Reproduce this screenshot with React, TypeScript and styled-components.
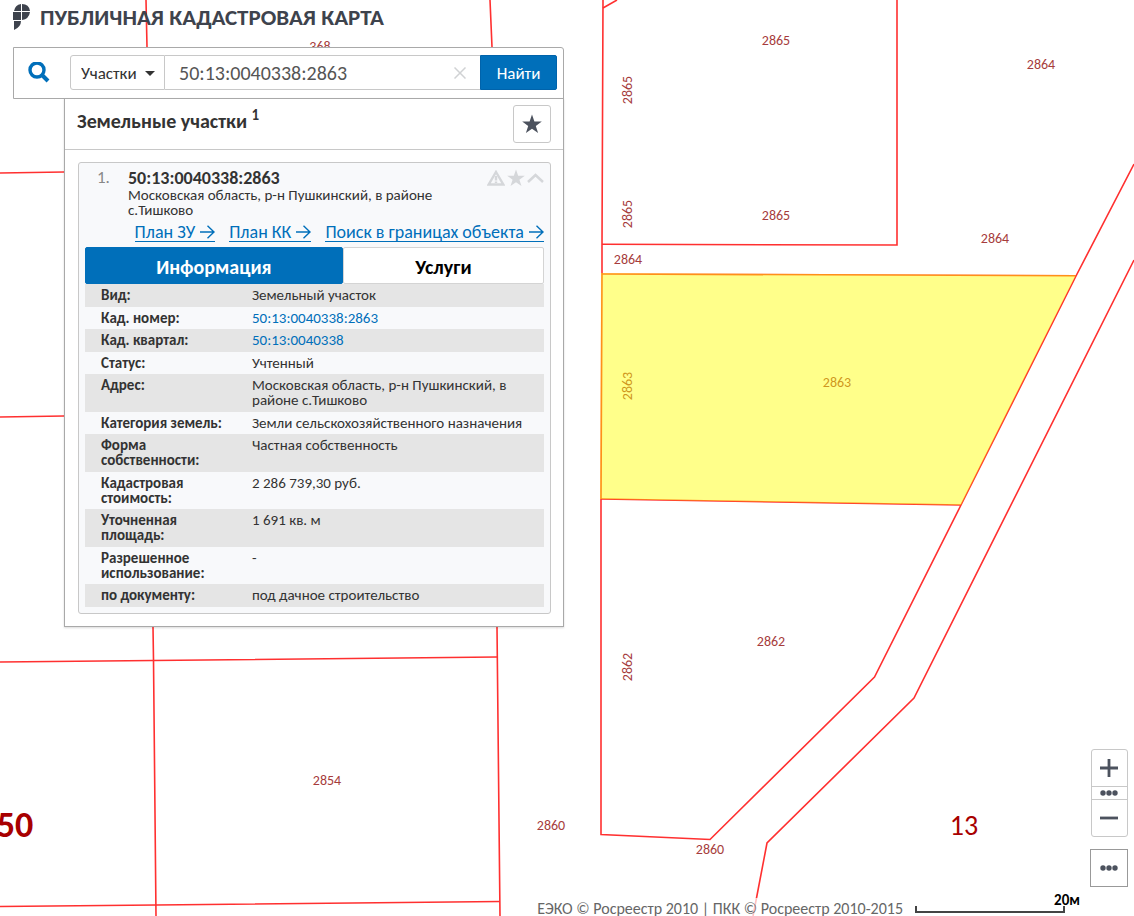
import React, { useState } from "react";
import styled, { createGlobalStyle } from "styled-components";

const GlobalStyle = createGlobalStyle`
  *, *::before, *::after { box-sizing: border-box; }
  body {
    margin: 0;
    background: #fff;
    color: #333;
    font-family: Carlito, Calibri, "Open Sans", "Noto Sans", sans-serif;
    font-size: 15px;
    line-height: 15px;
  }
  button, input, select { font: inherit; color: inherit; }
`;

const Page = styled.div`
  position: relative;
  display: flex;
  flex-direction: column;
  min-height: 100vh;
  overflow: hidden;
`;

const MapCanvas = styled.svg`
  position: absolute;
  inset: 0;
  width: 100%;
  height: 100%;
`;

const Boundary = styled.path`
  fill: none;
  stroke: #ff3030;
  stroke-width: 1.6;
`;

const Highlight = styled.path`
  fill: rgba(255, 255, 0, 0.46);
`;

const MapLabel = styled.text<{ $size?: number; $strong?: boolean }>`
  fill: ${(p) => (p.$size ? "#a80000" : "#a63c3c")};
  font-size: ${(p) => p.$size ?? 14}px;
  font-weight: ${(p) => (p.$strong ? 700 : 400)};
  text-anchor: middle;
  dominant-baseline: central;
`;

const Header = styled.header`
  position: relative;
  display: flex;
  align-items: center;
  gap: 9px;
  height: 47px;
  padding: 0 13px 14px;
`;

const Title = styled.h1`
  margin: 0;
  color: #3e434d;
  font-size: 23px;
  line-height: 26px;
`;

const Body = styled.main`
  position: relative;
  flex: 1;
  display: flex;
  justify-content: space-between;
  gap: 16px;
  padding: 0 6px 0 13px;
`;

const SearchPanel = styled.div`
  display: flex;
  flex-direction: column;
  width: 551px;
  min-width: 0;
`;

const SearchBar = styled.form`
  display: flex;
  align-items: center;
  height: 52px;
  padding: 0 6px 1px 14px;
  border: 1px solid #a9a9a9;
  border-radius: 0 3px 0 0;
  background: #fff;
`;

const SearchIcon = styled.svg`
  flex: none;
  width: 22px;
  height: 22px;
  margin-right: 20px;
`;

const KindField = styled.div`
  position: relative;
  flex: none;
  width: 95px;
  height: 35px;
`;

const KindSelect = styled.select`
  appearance: none;
  width: 100%;
  height: 100%;
  padding: 2px 20px 0 10px;
  border: 1px solid #c8c8c8;
  border-radius: 3px 0 0 3px;
  background: #fff;
  font-size: 17px;
`;

const Caret = styled.svg`
  position: absolute;
  right: 10px;
  top: 16px;
  width: 10px;
  height: 6px;
  pointer-events: none;
`;

const QueryField = styled.div`
  flex: 1;
  display: flex;
  align-items: center;
  min-width: 0;
  height: 35px;
  border: solid #c8c8c8;
  border-width: 1px 0;
`;

const QueryInput = styled.input`
  flex: 1;
  min-width: 0;
  height: 100%;
  padding: 0 0 0 14px;
  border: 0;
  outline: 0;
  background: none;
  color: #555;
  font-size: 20px;
`;

const IconButton = styled.button`
  display: flex;
  align-items: center;
  justify-content: center;
  padding: 0;
  border: 0;
  background: none;
`;

const ClearButton = styled(IconButton)`
  width: 41px;
  height: 33px;
`;

const SubmitButton = styled.button`
  flex: none;
  width: 77px;
  height: 35px;
  padding: 2px 0 0;
  border: 1px solid #0063ab;
  border-radius: 0 2px 2px 0;
  background: #006fba;
  color: #fff;
  font-size: 17px;
`;

const Results = styled.section`
  margin: -1px 0 0 51px;
  border: 1px solid #a9a9a9;
  background: #fff;
  box-shadow: 0 1px 2px rgba(0, 0, 0, 0.15);
`;

const ResultsHeader = styled.div`
  display: flex;
  align-items: center;
  justify-content: space-between;
  height: 51px;
  padding: 0 12px;
  border-bottom: 1px solid #c8c8c8;
`;

const ResultsTitle = styled.h2`
  margin: 0 0 6px;
  font-size: 20px;
  line-height: 24px;
`;

const Count = styled.sup`
  font-size: 15px;
  line-height: 0;
`;

const FavouriteButton = styled(IconButton)`
  width: 38px;
  height: 38px;
  border: 1px solid #c8c8c8;
  border-radius: 3px;
  background: #fff;
`;

const Card = styled.article`
  margin: 12px 12px 12px 13px;
  padding: 5px 6px 6px;
  border: 1px solid #c8c8c8;
  border-radius: 3px;
  background: #f8f9fb;
`;

const CardTop = styled.div`
  display: grid;
  grid-template-columns: 31px 1fr auto;
  padding-left: 12px;
`;

const Index = styled.span`
  color: #888;
  font-size: 17px;
  line-height: 20px;
`;

const Parcel = styled.h3`
  margin: 0;
  font-size: 18px;
  line-height: 20px;
`;

const Address = styled.p`
  margin: 0;
`;

const CardActions = styled.div`
  display: flex;
  align-items: center;
  gap: 2px;
  height: 20px;
`;

const Links = styled.nav`
  display: flex;
  justify-content: flex-end;
  gap: 14px;
  padding: 5px 0;
`;

const PlanLink = styled.a`
  display: flex;
  align-items: center;
  gap: 5px;
  border-bottom: 1px solid #006fba;
  color: #006fba;
  font-size: 18px;
  line-height: 18px;
  text-decoration: none;
  white-space: nowrap;
`;

const Tabs = styled.div`
  display: flex;
`;

const Tab = styled.button<{ $active: boolean }>`
  flex: ${(p) => (p.$active ? "258 1 0" : "201 1 0")};
  height: 37px;
  padding: 3px 0 0;
  border: 1px solid ${(p) => (p.$active ? "#006fba" : "#d4d4d4")};
  border-radius: 2px;
  background: ${(p) => (p.$active ? "#006fba" : "#fff")};
  color: ${(p) => (p.$active ? "#fff" : "#000")};
  font-size: 20px;
  font-weight: 700;
`;

const Details = styled.table`
  width: 100%;
  border-collapse: collapse;
`;

const DetailRow = styled.tr`
  vertical-align: top;
  &:nth-child(odd) { background: #e5e5e5; }
  &:nth-child(odd) > * { padding-bottom: 4px; }
`;

const DetailName = styled.th`
  width: 167px;
  padding: 4px 24px 3px 16px;
  text-align: left;
`;

const DetailValue = styled.td`
  padding: 4px 4px 3px 0;
`;

const ValueLink = styled.a`
  color: #006fba;
  text-decoration: none;
`;

const Controls = styled.aside`
  display: flex;
  flex-direction: column;
  align-items: flex-end;
  justify-content: flex-end;
  gap: 12px;
`;

const ZoomGroup = styled.div`
  display: flex;
  flex-direction: column;
  width: 37px;
  border: 1px solid #c8c8c8;
  border-radius: 3px;
  background: #fff;
`;

const ZoomButton = styled(IconButton)<{ $small?: boolean }>`
  height: ${(p) => (p.$small ? 14 : 36)}px;
  padding-right: 1px;
  border: solid #c8c8c8;
  border-width: ${(p) => (p.$small ? "1px 0" : "0")};
`;

const MoreButton = styled(IconButton)`
  width: 38px;
  height: 38px;
  border: 1px solid #999;
  background: #fff;
`;

const Footer = styled.footer`
  position: relative;
  display: flex;
  align-items: flex-end;
  justify-content: flex-end;
  gap: 12px;
  height: 29px;
  padding-right: 54px;
`;

const Attribution = styled.span`
  height: 18px;
  background: rgba(255, 255, 255, 0.7);
  color: #666;
  font-size: 16px;
  line-height: 22px;
  white-space: nowrap;
`;

const Scale = styled.div`
  width: 165px;
  color: #000;
  font-weight: 700;
  line-height: 15px;
  text-align: right;
`;

const ScaleBar = styled.div`
  width: 150px;
  height: 7px;
  margin-bottom: 3px;
  margin-top: -2px;
  border: solid #444;
  border-width: 0 2px 2px;
`;

const STAR =
  "M10 0l2.4 7h7.4l-6 4.4 2.3 7.1L10 14.2l-6.1 4.3 2.3-7.1-6-4.4h7.4z";

const boundaries = [
  "M146 0L147 47L153 627L153.500 660L156 916",
  "M490 0L492 47L497 627L500 916",
  "M0 173L64 172",
  "M0 417L64 416",
  "M0 662L153 660.500L497 657",
  "M0 906.500L156 905L500 901.500",
  "M603 0L602 244L602 274L601 499L601 834.500L710 839.500L874.500 677L961 505L1076 276L1134 164",
  "M603 8L617 0",
  "M897 0L897 245L602 244.300",
  "M602 274L1076 275.700",
  "M601 499L961 505",
  "M1134 260L914 698L767 843L756.500 898L753 916",
];

type Label = { text: string; x: number; y: number; vertical?: boolean; size?: number; strong?: boolean };

const labels: Label[] = [
  { text: "368", x: 320, y: 46 },
  { text: "2865", x: 776, y: 40 },
  { text: "2864", x: 1041, y: 64 },
  { text: "2865", x: 627, y: 90, vertical: true },
  { text: "2865", x: 627, y: 214, vertical: true },
  { text: "2865", x: 776, y: 215 },
  { text: "2864", x: 995, y: 238 },
  { text: "2864", x: 628, y: 259 },
  { text: "2863", x: 837, y: 382 },
  { text: "2863", x: 627, y: 386, vertical: true },
  { text: "2862", x: 771, y: 641 },
  { text: "2862", x: 627, y: 667, vertical: true },
  { text: "2854", x: 327, y: 780 },
  { text: "2860", x: 551, y: 825 },
  { text: "2860", x: 710, y: 849 },
  { text: "13", x: 964, y: 825, size: 28 },
  { text: "50", x: 15, y: 825, size: 36, strong: true },
];

const details: { name: string; value: string; link?: boolean }[] = [
  { name: "Вид:", value: "Земельный участок" },
  { name: "Кад. номер:", value: "50:13:0040338:2863", link: true },
  { name: "Кад. квартал:", value: "50:13:0040338", link: true },
  { name: "Статус:", value: "Учтенный" },
  { name: "Адрес:", value: "Московская область, р-н Пушкинский, в районе с.Тишково" },
  { name: "Категория земель:", value: "Земли сельскохозяйственного назначения" },
  { name: "Форма собственности:", value: "Частная собственность" },
  { name: "Кадастровая стоимость:", value: "2 286 739,30 руб." },
  { name: "Уточненная площадь:", value: "1 691 кв. м" },
  { name: "Разрешенное использование:", value: "-" },
  { name: "по документу:", value: "под дачное строительство" },
];

const Arrow = () => (
  <svg width="15" height="14" viewBox="0 0 15 14" fill="none" stroke="currentColor" strokeWidth="1.4" aria-hidden="true">
    <path d="M0 7H14M7.500 0.700L14 7L7.500 13.300" />
  </svg>
);

const Dots = () => (
  <svg width="18" height="6" viewBox="0 0 18 6" fill="#4c525e" aria-hidden="true">
    <circle cx="3" cy="3" r="2.700" />
    <circle cx="9" cy="3" r="2.700" />
    <circle cx="15" cy="3" r="2.700" />
  </svg>
);

const Star = ({ size, color }: { size: number; color: string }) => (
  <svg width={size} height={size} viewBox="0 0 20 19" fill={color} aria-hidden="true">
    <path d={STAR} />
  </svg>
);

export default function App() {
  const [query, setQuery] = useState("50:13:0040338:2863");
  const [tab, setTab] = useState("Информация");

  return (
    <>
      <GlobalStyle />
      <Page>
        <MapCanvas role="img" aria-label="Кадастровая карта">
          {boundaries.map((d) => (
            <Boundary key={d} d={d} />
          ))}
          {labels.map((l) => (
            <MapLabel
              key={`${l.x}-${l.y}`}
              x={l.x}
              y={l.y}
              $size={l.size}
              $strong={l.strong}
              transform={l.vertical ? `rotate(-90 ${l.x} ${l.y})` : undefined}
            >
              {l.text}
            </MapLabel>
          ))}
          <Highlight d="M601 273L1076 275L961 505L600 499Z" />
        </MapCanvas>

        <Header>
          <svg width="18" height="26" viewBox="0 0 18 26" fill="#3e434d" aria-hidden="true">
            <path d="M8 0V7H1Q2 1 8 0ZM9 0Q16 0 17 7H9ZM0 8H8V16H0ZM9 8H17Q16 15 9 16ZM1 17H8Q8 23 1 26Z" />
          </svg>
          <Title>ПУБЛИЧНАЯ КАДАСТРОВАЯ КАРТА</Title>
        </Header>

        <Body>
          <SearchPanel>
            <SearchBar onSubmit={(e) => e.preventDefault()}>
              <SearchIcon viewBox="0 0 22 22" fill="none" stroke="#006fba" strokeWidth="3.4" aria-hidden="true">
                <circle cx="9" cy="8" r="7" />
                <path d="M14 13L20 19" strokeWidth="4" />
              </SearchIcon>
              <KindField>
                <KindSelect aria-label="Тип объекта" defaultValue="Участки">
                  <option>Участки</option>
                </KindSelect>
                <Caret viewBox="0 0 10 6" fill="#333" aria-hidden="true">
                  <path d="M0 0H10L5 5Z" />
                </Caret>
              </KindField>
              <QueryField>
                <QueryInput aria-label="Кадастровый номер" value={query} onChange={(e) => setQuery(e.target.value)} />
                <ClearButton type="button" aria-label="Очистить" onClick={() => setQuery("")}>
                  <svg width="12" height="12" viewBox="0 0 12 12" fill="none" stroke="#d0d2d4" strokeWidth="1.500">
                    <path d="M0.500 0.500L11.500 11.500M11.500 0.500L0.500 11.500" />
                  </svg>
                </ClearButton>
              </QueryField>
              <SubmitButton type="submit">Найти</SubmitButton>
            </SearchBar>

            <Results>
              <ResultsHeader>
                <ResultsTitle>
                  Земельные участки <Count>1</Count>
                </ResultsTitle>
                <FavouriteButton type="button" aria-label="Избранное">
                  <Star size={20} color="#4c525e" />
                </FavouriteButton>
              </ResultsHeader>

              <Card>
                <CardTop>
                  <Index>1.</Index>
                  <div>
                    <Parcel>50:13:0040338:2863</Parcel>
                    <Address>Московская область, р-н Пушкинский, в районе с.Тишково</Address>
                  </div>
                  <CardActions>
                    <IconButton type="button" aria-label="Сообщить об ошибке">
                      <svg width="18" height="16" viewBox="0 0 18 16" fill="none" stroke="#d5d7da" strokeWidth="2.4">
                        <path d="M9 2L16.300 14.500H1.700Z" />
                        <path d="M9 6V10.500M9 11.500V13" />
                      </svg>
                    </IconButton>
                    <IconButton type="button" aria-label="В избранное">
                      <Star size={18} color="#d5d7da" />
                    </IconButton>
                    <IconButton type="button" aria-label="Свернуть">
                      <svg width="17" height="10" viewBox="0 0 17 10" fill="none" stroke="#d5d7da" strokeWidth="2.500">
                        <path d="M1 9L8.500 2L16 9" />
                      </svg>
                    </IconButton>
                  </CardActions>
                </CardTop>

                <Links>
                  <PlanLink href="#zu">План ЗУ <Arrow /></PlanLink>
                  <PlanLink href="#kk">План КК <Arrow /></PlanLink>
                  <PlanLink href="#search">Поиск в границах объекта <Arrow /></PlanLink>
                </Links>

                <Tabs role="tablist">
                  {["Информация", "Услуги"].map((name) => (
                    <Tab
                      key={name}
                      type="button"
                      role="tab"
                      aria-selected={tab === name}
                      $active={tab === name}
                      onClick={() => setTab(name)}
                    >
                      {name}
                    </Tab>
                  ))}
                </Tabs>

                <Details>
                  <tbody>
                    {details.map((d) => (
                      <DetailRow key={d.name}>
                        <DetailName scope="row">{d.name}</DetailName>
                        <DetailValue>
                          {d.link ? <ValueLink href={`#${d.value}`}>{d.value}</ValueLink> : d.value}
                        </DetailValue>
                      </DetailRow>
                    ))}
                  </tbody>
                </Details>
              </Card>
            </Results>
          </SearchPanel>

          <Controls>
            <ZoomGroup>
              <ZoomButton type="button" aria-label="Приблизить">
                <svg width="18" height="18" viewBox="0 0 18 18" stroke="#4c525e" strokeWidth="2.800">
                  <path d="M0 9H18M9 0V18" />
                </svg>
              </ZoomButton>
              <ZoomButton type="button" aria-label="Масштаб" $small>
                <Dots />
              </ZoomButton>
              <ZoomButton type="button" aria-label="Отдалить">
                <svg width="18" height="4" viewBox="0 0 18 4" stroke="#4c525e" strokeWidth="2.800">
                  <path d="M0 2H18" />
                </svg>
              </ZoomButton>
            </ZoomGroup>
            <MoreButton type="button" aria-label="Ещё">
              <Dots />
            </MoreButton>
          </Controls>
        </Body>

        <Footer>
          <Attribution>ЕЭКО © Росреестр 2010 | ПКК © Росреестр 2010-2015</Attribution>
          <Scale>
            20м
            <ScaleBar />
          </Scale>
        </Footer>
      </Page>
    </>
  );
}
